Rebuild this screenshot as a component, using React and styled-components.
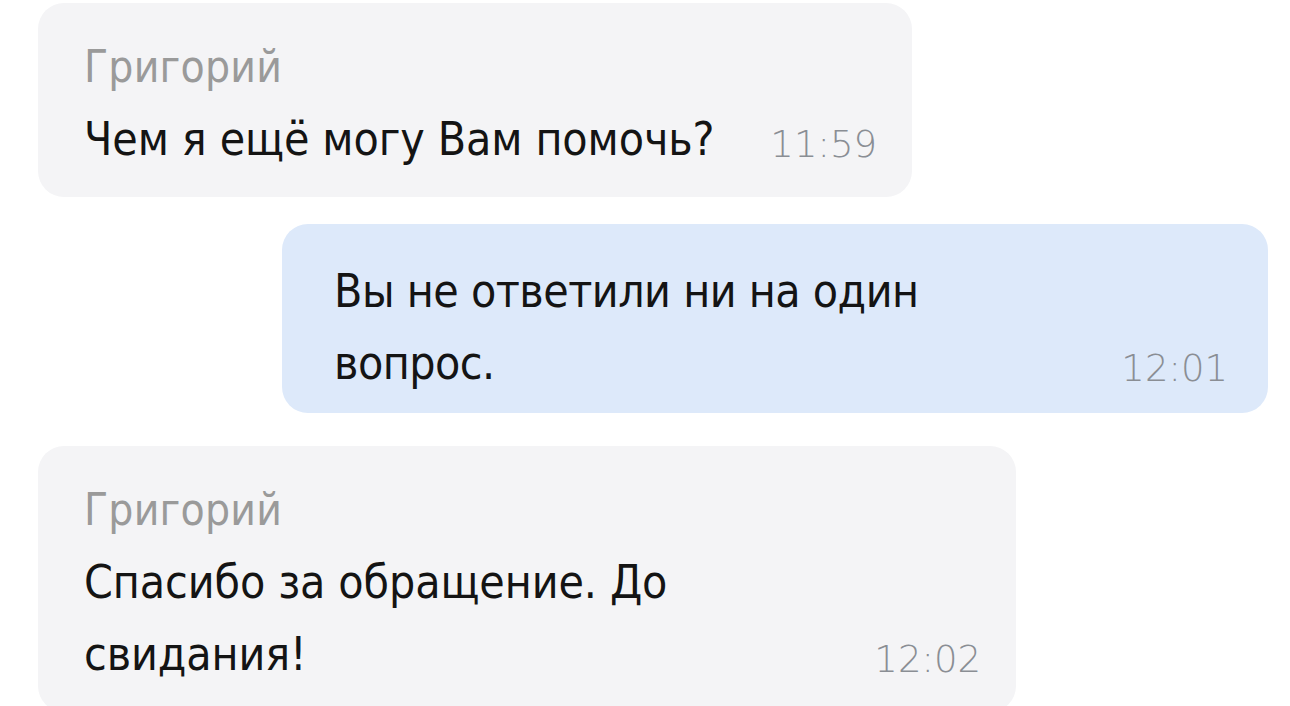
import React from 'react';
import styled, { createGlobalStyle } from 'styled-components';

const Global = createGlobalStyle`
  html, body { margin: 0; padding: 0; background: #ffffff; }
  body {
    font-family: "DejaVu Sans Condensed", "DejaVu Sans", sans-serif;
    font-stretch: condensed;
  }
`;

const Feed = styled.div`
  width: 1290px;
  height: 706px;
  overflow: hidden;
  box-sizing: border-box;
  padding: 3px 22px 0 38px;
  display: flex;
  flex-direction: column;
`;

const Bubble = styled.div`
  align-self: ${p => (p.$out ? 'flex-end' : 'flex-start')};
  width: ${p => p.$w}px;
  margin-top: ${p => p.$mt || 0}px;
  box-sizing: border-box;
  flex-shrink: 0;
  background: ${p => (p.$out ? '#dde9fa' : '#f4f4f6')};
  border-radius: 26px;
  padding: ${p => (p.$out ? '31px 40px 14px 52px' : '28px 35px 22px 46px')};
`;

const Name = styled.div`
  font-size: 44px;
  line-height: 72px;
  color: #9a9a9a;
  letter-spacing: 0.2px;
`;

const Row = styled.div`
  display: flex;
  align-items: flex-end;
`;

const Text = styled.div`
  max-width: 680px;
  font-size: 46px;
  line-height: 72px;
  color: #141414;
  letter-spacing: ${p => p.$ls || '-0.1px'};
`;

const Time = styled.div`
  margin-left: auto;
  padding-left: 40px;
  font-family: "DejaVu Sans", sans-serif;
  font-stretch: normal;
  font-size: 37px;
  line-height: 60px;
  color: #8a8e94;
  white-space: nowrap;
  font-weight: 200;
`;

const messages = [
  { id: 1, out: false, w: 874, mt: 0, name: 'Григорий', text: 'Чем я ещё могу Вам помочь?', time: '11:59' },
  { id: 2, out: true, w: 986, mt: 27, text: 'Вы не ответили ни на один вопрос.', time: '12:01', ls: '-0.5px' },
  { id: 3, out: false, w: 978, mt: 33, name: 'Григорий', text: 'Спасибо за обращение. До свидания!', time: '12:02' },
];

export default function App() {
  return (
    <>
      <Global />
      <Feed>
        {messages.map(m => (
          <Bubble key={m.id} $out={m.out} $w={m.w} $mt={m.mt}>
            {m.name && <Name>{m.name}</Name>}
            <Row>
              <Text $ls={m.ls}>{m.text}</Text>
              <Time>{m.time}</Time>
            </Row>
          </Bubble>
        ))}
      </Feed>
    </>
  );
}
